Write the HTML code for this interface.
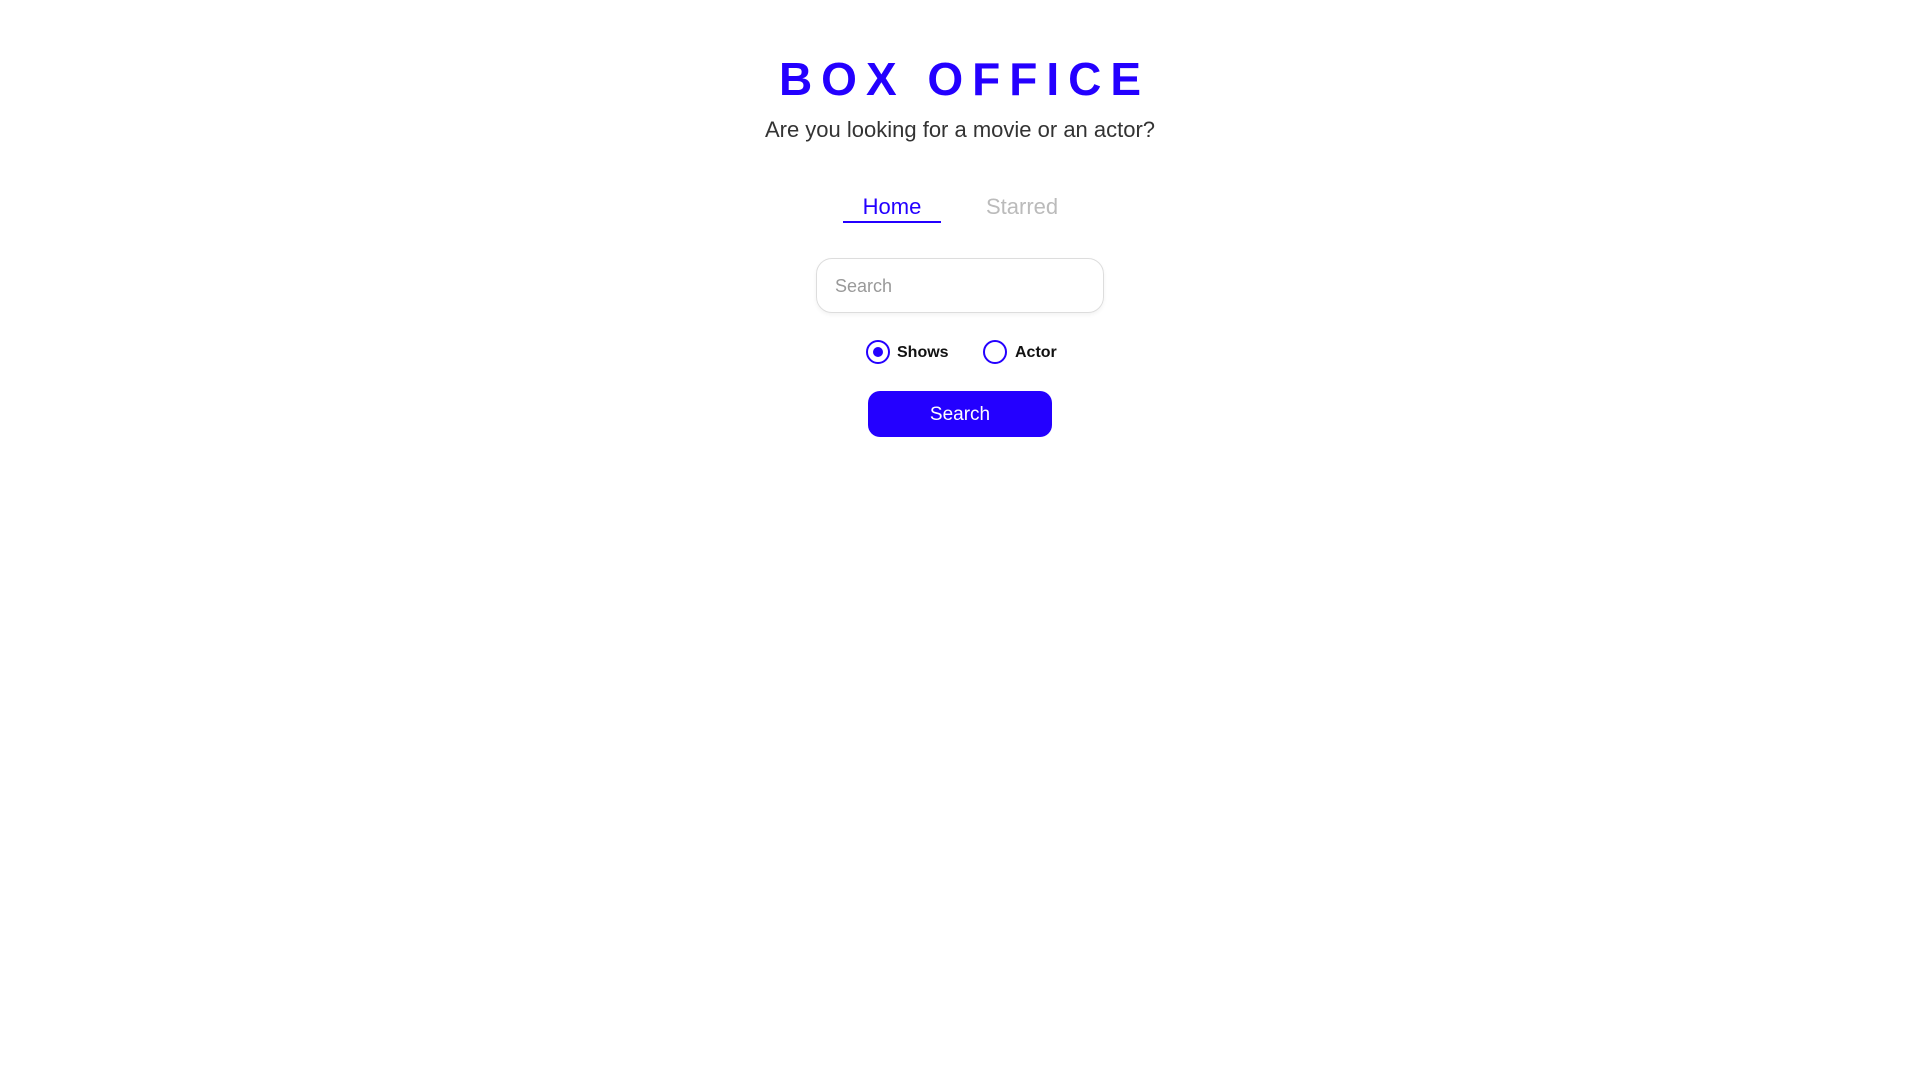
<!DOCTYPE html>
<html><head><style>
body{margin:0;width:1920px;height:1080px;background:#fff;font-family:"Liberation Sans",sans-serif;position:relative}
.a{position:absolute;white-space:nowrap}
</style></head><body>
<div class="a" style="left:0;width:1929px;text-align:center;top:52px;font-size:46px;font-weight:bold;color:#2400ff;letter-spacing:9px">BOX OFFICE</div>
<div class="a" style="left:0;width:1920px;text-align:center;top:117px;font-size:22px;color:#333">Are you looking for a movie or an actor?</div>
<div class="a" style="left:843px;width:98px;text-align:center;top:194px;font-size:22px;color:#2400ff">Home</div>
<div class="a" style="left:843px;width:98px;top:221px;height:2px;background:#2400ff"></div>
<div class="a" style="left:986px;top:194px;font-size:22px;color:#bbb">Starred</div>
<div class="a" style="left:816px;top:258px;width:286px;height:53px;border:1px solid #ddd;border-radius:16px;box-shadow:0 2px 4px rgba(0,0,0,.05)"></div>
<div class="a" style="left:835px;top:276px;font-size:18px;color:#999">Search</div>
<div class="a" style="left:866px;top:340px;width:20px;height:20px;border:2px solid #2400ff;border-radius:50%"></div>
<div class="a" style="left:873px;top:347px;width:10px;height:10px;background:#2400ff;border-radius:50%"></div>
<div class="a" style="left:897px;top:344px;font-size:16px;font-weight:bold;color:#111">Shows</div>
<div class="a" style="left:983px;top:340px;width:20px;height:20px;border:2px solid #2400ff;border-radius:50%"></div>
<div class="a" style="left:1015px;top:344px;font-size:16px;font-weight:bold;color:#111">Actor</div>
<div class="a" style="left:868px;top:391px;width:184px;height:46px;background:#2400ff;border-radius:12px;color:#fff;font-size:19px;text-align:center;line-height:47px">Search</div>
</body></html>
